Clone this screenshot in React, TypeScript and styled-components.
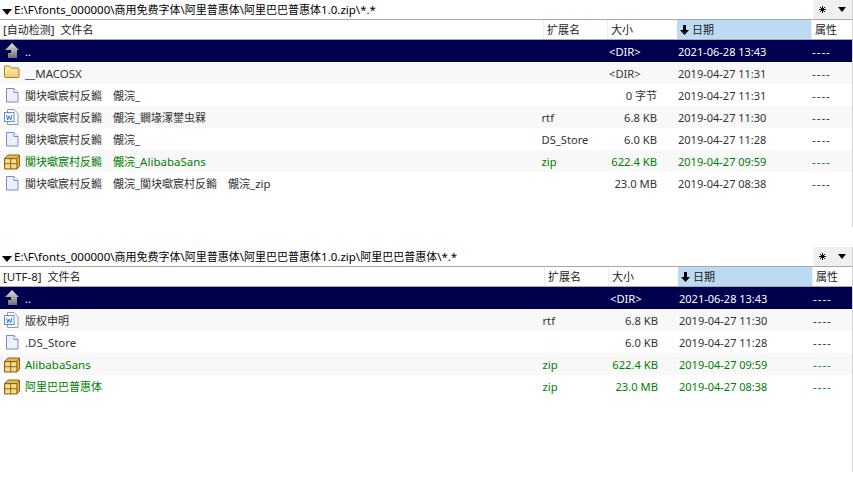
import React from 'react';
import styled, { createGlobalStyle } from 'styled-components';

const Global = createGlobalStyle`
  html, body { margin: 0; padding: 0; background: #fff; }
  body { font-family: "Noto Sans", "Noto Sans CJK SC", sans-serif; font-size: 11.5px; overflow: hidden; }
`;

const Page = styled.div`
  width: 853px; height: 481px; display: flex; flex-direction: column; background: #fff; overflow: hidden;
`;
const Panel = styled.section<{ $height: number; $offset: number; $gap: number }>`
  height: ${p => p.$height}px;
  margin-bottom: ${p => p.$gap}px;
  border-right: 1px solid #d4d4d4;
  --cols: ${p => 543 + p.$offset}px 64px 70px 134px 1fr;
`;
const PathBar = styled.div`
  height: 19px; display: flex; align-items: center; color: #000; border-bottom: 1px solid #a8a8a8;
`;
const Caret = styled.span`
  width: 0; height: 0; border-left: 5.5px solid transparent; border-right: 5.5px solid transparent; border-top: 6px solid #000;
  margin: 4px 2px 0 2px; flex: none;
`;
const PathText = styled.span`flex: 1; white-space: nowrap; line-height: 19px;`;
const Cjk = styled.span`font-size: 11px;`;
const Tools = styled.div`
  width: 39px; height: 19px; background: #f0f0f0; display: flex; align-items: center; justify-content: space-between;
  padding: 0 6px 0 6px; box-sizing: border-box; flex: none;
`;
const SmallCaret = styled.span`
  width: 0; height: 0; border-left: 4.5px solid transparent; border-right: 4.5px solid transparent; border-top: 5px solid #000;
`;
const Header = styled.div`
  display: grid; grid-template-columns: var(--cols); height: 19px; border-bottom: 1px solid #a8a8a8; color: #222;
`;
const HeadCell = styled.div<{ $active?: boolean }>`
  display: flex; align-items: center; padding-left: 3px; line-height: 19px; white-space: pre;
  background: ${p => (p.$active ? '#bcdaf2' : 'transparent')};
  border-left: ${p => (p.$active ? 'none' : '1px solid #ececec')};
  &:first-child { border-left: none; }
`;
const SortArrow = styled.svg`width: 9px; height: 10px; margin-right: 3px; flex: none;`;
const Row = styled.div<{ $kind: 'sel' | 'green' | 'plain'; $odd: boolean }>`
  display: grid; grid-template-columns: var(--cols); height: 22px; align-items: center;
  background: ${p => (p.$kind === 'sel' ? '#000050' : p.$odd ? '#f8f8f8' : '#fff')};
  color: ${p => (p.$kind === 'sel' ? '#fff' : p.$kind === 'green' ? '#008000' : '#333')};
`;
const NameCell = styled.div`display: flex; align-items: center; white-space: pre; padding-left: 3px;`;
const IconBox = styled.span`width: 18px; height: 18px; flex: none; margin-right: 4px; display: block;`;
const ExtCell = styled.div`white-space: nowrap; margin-left: -1.5px; font-size: 11.2px;`;
const DirCell = styled.div`white-space: nowrap; padding-left: 2px; font-size: 11.2px;`;
const SizeCell = styled.div`white-space: nowrap; text-align: right; padding-right: 20px; font-size: 11.2px;`;
const DateCell = styled.div`white-space: nowrap; padding-left: 1px; font-size: 11px;`;
const AttrCell = styled.div`white-space: nowrap; padding-left: 1px; letter-spacing: 1px;`;

const UpIcon = () => (
  <IconBox as="svg" viewBox="0 0 18 18">
    <defs>
      <linearGradient id="upg" x1="0" y1="0" x2="0" y2="1">
        <stop offset="0" stopColor="#e0e0e0" /><stop offset="1" stopColor="#707070" />
      </linearGradient>
    </defs>
    <path d="M9 1 L16 8 H14 V16 H5 V11 H8 V8 H2 Z" fill="url(#upg)" />
  </IconBox>
);
const FolderIcon = () => (
  <IconBox as="svg" viewBox="0 0 18 18">
    <defs>
      <linearGradient id="fdg" x1="0" y1="0" x2="0" y2="1">
        <stop offset="0" stopColor="#fcecb8" /><stop offset="1" stopColor="#f6cc6c" />
      </linearGradient>
    </defs>
    <path d="M1.500 3 a1 1 0 0 1 1 -1 h4 l2 2 h6.500 a1 1 0 0 1 1 1 v7.500 a1 1 0 0 1 -1 1 h-12.500 a1 1 0 0 1 -1 -1 Z" fill="url(#fdg)" stroke="#a87a2c" />
  </IconBox>
);
const FileIcon = () => (
  <IconBox as="svg" viewBox="0 0 18 18">
    <path d="M3.500 2.500 h7.500 l4 4 v9.500 h-11.500 Z" fill="#eef0fc" stroke="#7c88d0" />
    <path d="M11 2.500 v4 h4" fill="#fff" stroke="#7c88d0" />
  </IconBox>
);
const WordIcon = () => (
  <IconBox as="svg" viewBox="0 0 18 18">
    <path d="M4.500 1.500 h6.500 l4 4 v11 h-10.500 Z" fill="#fafafa" stroke="#9a9a9a" />
    <rect x="1.500" y="4.500" width="9.500" height="9" fill="#fff" stroke="#5a90dc" />
    <path d="M3.500 7 l1.200 5 l1.500 -4 l1.500 4 l1.200 -5" fill="none" stroke="#3a78d0" strokeWidth="1" />
  </IconBox>
);
const ZipIcon = () => (
  <IconBox as="svg" viewBox="0 0 18 18">
    <path d="M1.500 6.500 L5 3 H16.500 V14 L14 17 H1.500 Z" fill="#e8b848" stroke="#8a6420" />
    <path d="M1.500 6.500 H14 L16.500 3 M14 6.500 V17" fill="none" stroke="#8a6420" />
    <path d="M2.500 7.500 H13 V16 H2.500 Z" fill="#f8dc88" />
    <path d="M7.700 6.500 V17 M1.500 11.700 H14" stroke="#8a6420" />
  </IconBox>
);
const Star = () => (
  <svg width="7" height="7" viewBox="0 0 7 7" stroke="#000" strokeWidth="1">
    <path d="M3.500 0 V7 M0 3.500 H7 M1 1 L6 6 M6 1 L1 6" />
  </svg>
);

// Chinese runs are set slightly smaller than the Latin around them, as in the source UI font pairing.
const Mixed = ({ text }: { text: string }) => (
  <>
    {text.split(/([\u3000-\u9fff]+)/).map((part, i) =>
      i % 2 === 1 ? <Cjk key={i}>{part}</Cjk> : <React.Fragment key={i}>{part}</React.Fragment>
    )}
  </>
);

const icons = { up: UpIcon, folder: FolderIcon, file: FileIcon, word: WordIcon, zip: ZipIcon };
type Item = { icon: keyof typeof icons; name: string; ext?: string; size: string; date: string; kind: 'sel' | 'green' | 'plain'; dir?: boolean };

const M = '闃块噷宸村反鏅　儬浣';
const top: Item[] = [
  { icon: 'up', name: '..', size: '<DIR>', dir: true, date: '2021-06-28 13:43', kind: 'sel' },
  { icon: 'folder', name: '__MACOSX', size: '<DIR>', dir: true, date: '2019-04-27 11:31', kind: 'plain' },
  { icon: 'file', name: `${M}_`, size: '0 字节', date: '2019-04-27 11:31', kind: 'plain' },
  { icon: 'word', name: `${M}_鐗堟潈鐢虫槑`, ext: 'rtf', size: '6.8 KB', date: '2019-04-27 11:30', kind: 'plain' },
  { icon: 'file', name: `${M}_`, ext: 'DS_Store', size: '6.0 KB', date: '2019-04-27 11:28', kind: 'plain' },
  { icon: 'zip', name: `${M}_AlibabaSans`, ext: 'zip', size: '622.4 KB', date: '2019-04-27 09:59', kind: 'green' },
  { icon: 'file', name: `${M}_${M}_zip`, size: '23.0 MB', date: '2019-04-27 08:38', kind: 'plain' },
];
const bottom: Item[] = [
  { icon: 'up', name: '..', size: '<DIR>', dir: true, date: '2021-06-28 13:43', kind: 'sel' },
  { icon: 'word', name: '版权申明', ext: 'rtf', size: '6.8 KB', date: '2019-04-27 11:30', kind: 'plain' },
  { icon: 'file', name: '.DS_Store', size: '6.0 KB', date: '2019-04-27 11:28', kind: 'plain' },
  { icon: 'zip', name: 'AlibabaSans', ext: 'zip', size: '622.4 KB', date: '2019-04-27 09:59', kind: 'green' },
  { icon: 'zip', name: '阿里巴巴普惠体', ext: 'zip', size: '23.0 MB', date: '2019-04-27 08:38', kind: 'green' },
];

type PanelProps = { path: string; enc: string; items: Item[]; height: number; offset: number; gap: number };
const FilePanel = ({ path, enc, items, height, offset, gap }: PanelProps) => (
  <Panel $height={height} $offset={offset} $gap={gap}>
    <PathBar>
      <Caret />
      <PathText><Mixed text={path} /></PathText>
      <Tools><Star /><SmallCaret /></Tools>
    </PathBar>
    <Header>
      <HeadCell><span><Mixed text={`${enc}  文件名`} /></span></HeadCell>
      <HeadCell><Cjk>扩展名</Cjk></HeadCell>
      <HeadCell><Cjk>大小</Cjk></HeadCell>
      <HeadCell $active>
        <SortArrow viewBox="0 0 9 10"><path d="M3 0 H6 V5 H9 L4.500 10 L0 5 H3 Z" fill="#000" /></SortArrow>
        <Cjk>日期</Cjk>
      </HeadCell>
      <HeadCell><Cjk>属性</Cjk></HeadCell>
    </Header>
    {items.map((it, i) => {
      const Icon = icons[it.icon];
      return (
        <Row key={i} $kind={it.kind} $odd={i % 2 === 1}>
          <NameCell><Icon /><span><Mixed text={it.name} /></span></NameCell>
          <ExtCell>{it.ext ?? ''}</ExtCell>
          {it.dir ? <DirCell>{it.size}</DirCell> : <SizeCell><Mixed text={it.size} /></SizeCell>}
          <DateCell>{it.date}</DateCell>
          <AttrCell>----</AttrCell>
        </Row>
      );
    })}
  </Panel>
);

export default function App() {
  return (
    <Page>
      <Global />
      <FilePanel path="E:\F\fonts_000000\商用免费字体\阿里普惠体\阿里巴巴普惠体1.0.zip\*.*" enc="[自动检测]" items={top} height={227} gap={20} offset={0} />
      <FilePanel path="E:\F\fonts_000000\商用免费字体\阿里普惠体\阿里巴巴普惠体1.0.zip\阿里巴巴普惠体\*.*" enc="[UTF-8]" items={bottom} height={225} gap={0} offset={1} />
    </Page>
  );
}
